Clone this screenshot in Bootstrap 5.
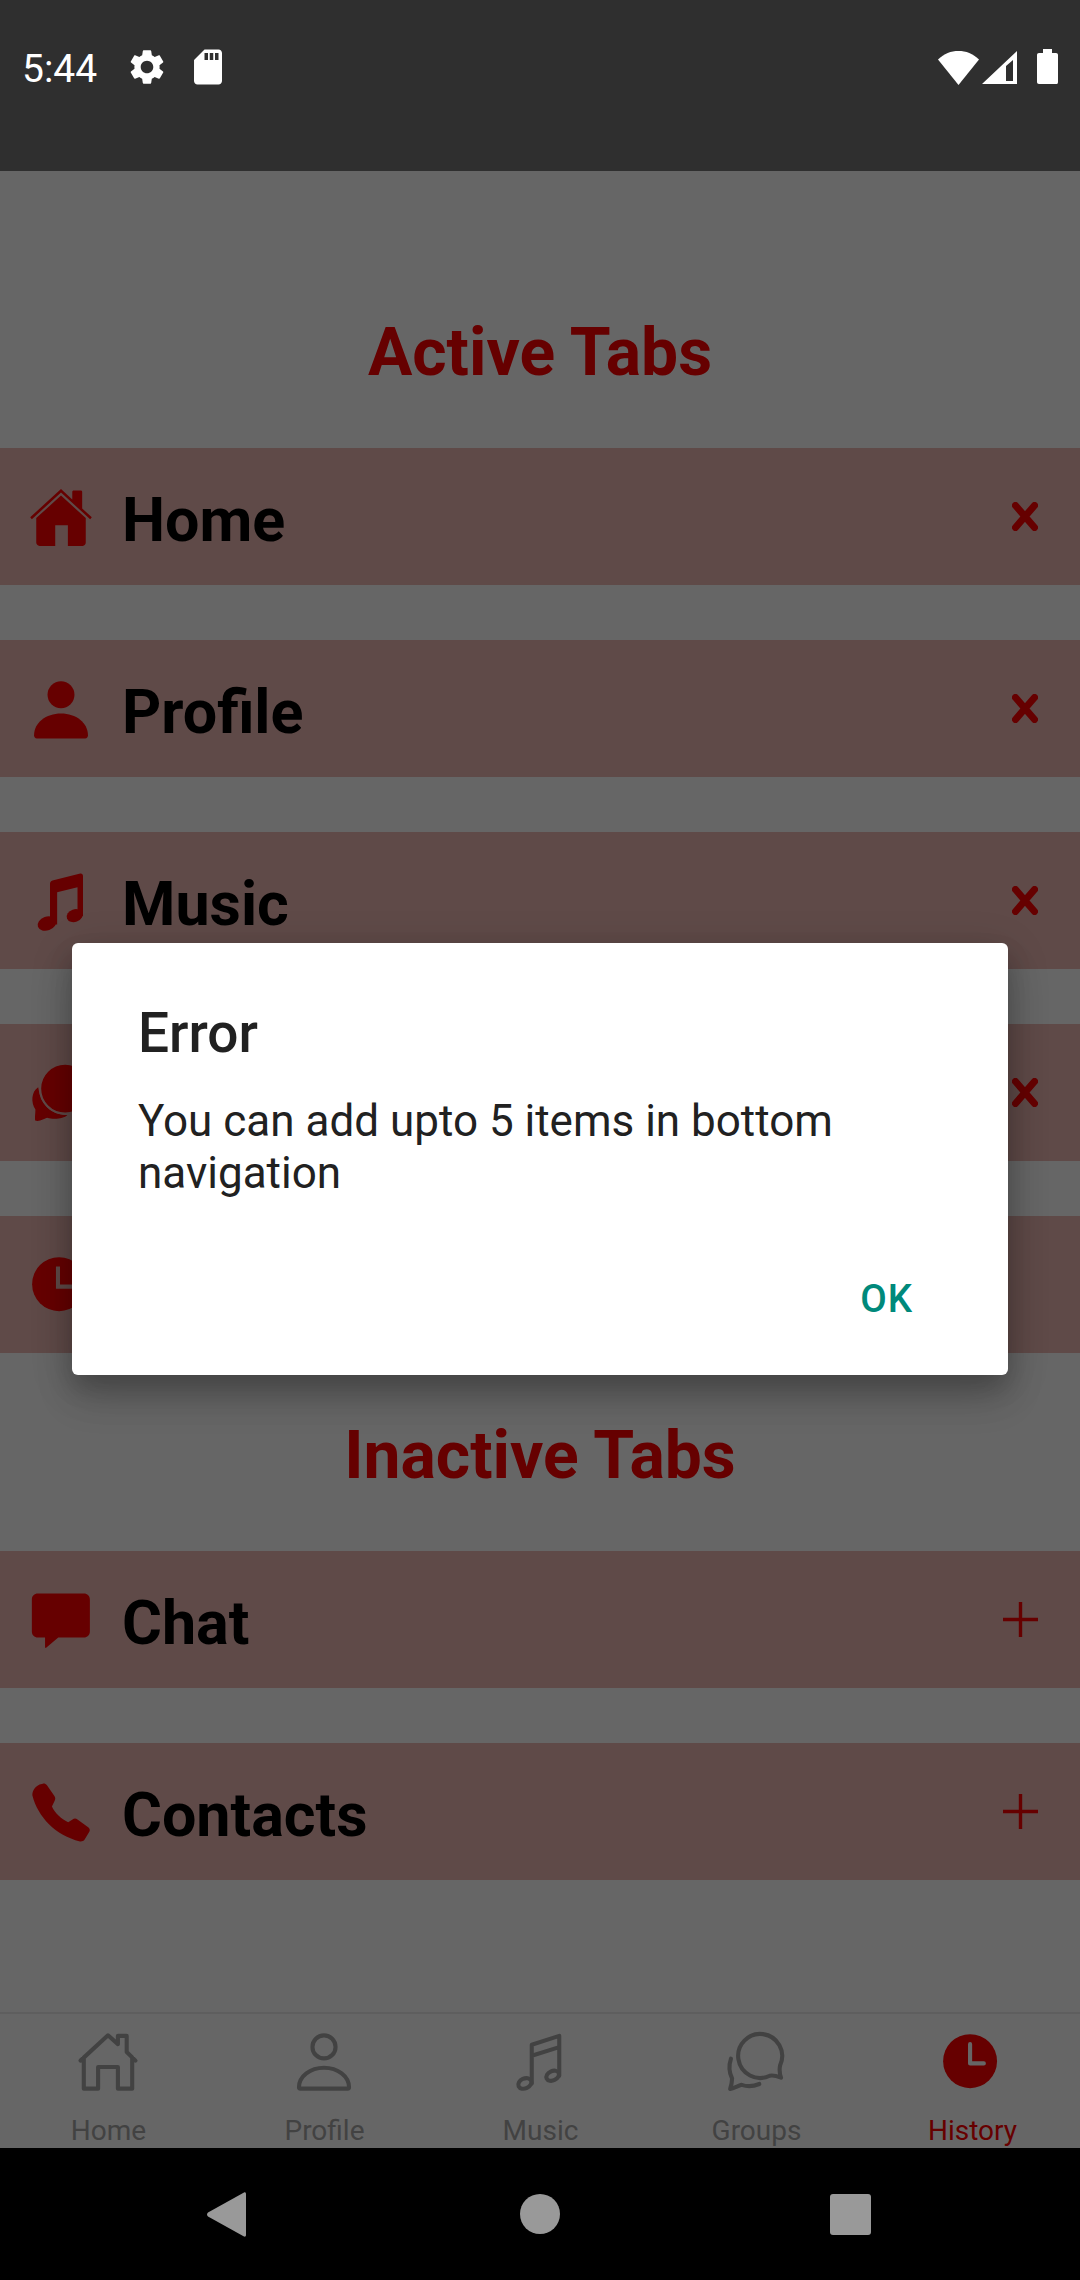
<!DOCTYPE html>
<html lang="en">
<head>
    <meta charset="UTF-8">
    <meta name="viewport" content="width=device-width, initial-scale=1.0">
    <title>Tabs</title>
    <link href="https://cdn.jsdelivr.net/npm/bootstrap@5.3.0/dist/css/bootstrap.min.css" rel="stylesheet">
    <style>
        body {
            font-family: Roboto, "Liberation Sans", sans-serif;
            width: 1080px;
            height: 2280px;
            overflow: hidden;
            background-color: #000;
        }

        .status-strip {
            height: 171px;
            background-color: #2f2f2f;
            color: #fff;
            padding: 46px 22px 0 22px;
        }

        .status-time {
            font-size: 39px;
            line-height: 45px;
            margin-right: 29px;
            margin-top: 1px;
        }

        .status-gear {
            margin-right: 19px;
        }

        .status-icons-right {
            gap: 3px;
            margin-top: 3px;
        }

        .status-signal {
            margin-right: 17px;
        }

        .app-area {
            height: 1977px;
            background-color: #fff;
        }

        .section-title {
            font-size: 66px;
            line-height: 77px;
            font-weight: 700;
            color: #f00;
            text-align: center;
            margin: 0 0 57px;
        }

        .section-title.first-title {
            padding-top: 143px;
        }

        .section-title.second-title {
            margin-top: 64px;
        }

        .tab-row {
            height: 137px;
            background-color: #eeb9b4;
            margin-bottom: 55px;
            padding: 0 42px 0 28px;
        }

        .tab-icon {
            width: 66px;
            height: 66px;
            flex-shrink: 0;
            fill: #f00;
        }

        .tab-name {
            font-size: 61px;
            line-height: 71px;
            font-weight: 700;
            color: #000;
            margin-left: 28px;
            padding-top: 8px;
        }

        .tab-close {
            stroke: #f00;
            stroke-width: 7;
            stroke-linecap: round;
        }

        .tab-add {
            stroke: #f00;
            stroke-width: 3.4;
        }

        .bottom-tabs {
            position: absolute;
            left: 0;
            bottom: 0;
            width: 100%;
            height: 136px;
            border-top: 2px solid #ebebeb;
            background-color: #fff;
            padding-top: 15px;
            overflow: hidden;
        }

        .bottom-tab {
            flex: 1 1 0;
            color: #a6a6a6;
        }

        .bottom-tab.selected {
            color: #f00;
        }

        .bottom-tab svg {
            width: 66px;
            height: 66px;
            fill: none;
            stroke: currentColor;
            stroke-width: 1.5;
            stroke-linejoin: round;
            stroke-linecap: round;
        }

        .bottom-tab span {
            font-size: 28px;
            line-height: 32px;
            margin-top: 20px;
            margin-left: 1px;
        }

        .dim-layer {
            background-color: rgba(0, 0, 0, .6);
        }

        .error-box {
            width: 936px;
            height: 432px;
            margin-bottom: 2px;
            background-color: #fff;
            border-radius: 6px;
            padding: 58px 95px 0 66px;
            color: #212121;
            box-shadow: 0 24px 38px rgba(0, 0, 0, .14), 0 9px 46px rgba(0, 0, 0, .14), 0 12px 24px rgba(0, 0, 0, .14);
        }

        .error-title {
            font-size: 55px;
            line-height: 64px;
            font-weight: 500;
            margin: 0 0 30px;
        }

        .error-text {
            font-size: 44px;
            line-height: 52px;
            margin: 0 0 77px;
        }

        .error-ok {
            font-family: inherit;
            font-size: 38.5px;
            line-height: 45px;
            font-weight: 500;
            letter-spacing: 1px;
            color: #00897b;
            padding: 0;
            border: 0;
            border-radius: 0;
        }

        .system-bar {
            height: 132px;
            background-color: #000;
            gap: 270px;
            padding-right: 3px;
            fill: #999;
        }

        .system-back {
            margin-right: 4px;
        }
    </style>
</head>
<body>
    <div class="status-strip d-flex align-items-start justify-content-between">
        <div class="d-flex align-items-start">
            <span class="status-time">5:44</span>
            <svg width="42" height="42" viewBox="0 0 24 24" fill="#fff" class="status-gear"><path d="M19.14 12.94c.04-.3.06-.61.06-.94 0-.32-.02-.64-.07-.94l2.03-1.58c.18-.14.23-.41.12-.61l-1.92-3.32c-.12-.22-.37-.29-.59-.22l-2.39.96c-.5-.38-1.03-.7-1.62-.94l-.36-2.54c-.04-.24-.24-.41-.48-.41h-3.84c-.24 0-.43.17-.47.41l-.36 2.54c-.59.24-1.13.57-1.62.94l-2.39-.96c-.22-.08-.47 0-.59.22L2.74 8.87c-.12.21-.08.47.12.61l2.03 1.58c-.05.3-.09.63-.09.94s.02.64.07.94l-2.03 1.58c-.18.14-.23.41-.12.61l1.92 3.32c.12.22.37.29.59.22l2.39-.96c.5.38 1.03.7 1.62.94l.36 2.54c.05.24.24.41.48.41h3.84c.24 0 .44-.17.47-.41l.36-2.54c.59-.24 1.13-.56 1.62-.94l2.39.96c.22.08.47 0 .59-.22l1.92-3.32c.12-.22.07-.47-.12-.61l-2.01-1.58zM12 15.6c-1.98 0-3.6-1.62-3.6-3.6s1.62-3.6 3.6-3.6 3.6 1.62 3.6 3.6-1.62 3.6-3.6 3.6z"/></svg>
            <svg width="42" height="42" viewBox="0 0 24 24" fill="#fff"><path d="M18 2h-8L4.02 8 4 20c0 1.1.9 2 2 2h12c1.1 0 2-.9 2-2V4c0-1.1-.9-2-2-2zm-6 6h-2V4h2v4zm3 0h-2V4h2v4zm3 0h-2V4h2v4z"/></svg>
        </div>
        <div class="status-icons-right d-flex align-items-end">
            <svg width="41" height="35" viewBox="0 0 41 35" fill="#fff"><path d="M0 9.5C6 3.5 13 1 20.5 1S35 3.5 41 9.5L20.5 35Z"/></svg>
            <svg width="35" height="35" viewBox="0 0 35 35" fill="#fff" class="status-signal"><path fill-rule="evenodd" d="M35 1V34H0ZM24 16V31H31V10Z"/></svg>
            <svg width="21" height="36" viewBox="0 0 21 36" fill="#fff"><path d="M6 0H15V4H19C20.2 4 21 4.8 21 6V33C21 34.700 20.200 35 19 35H2C.8 35 0 34.200 0 33V6C0 4.800 .8 4 2 4H6Z"/></svg>
        </div>
    </div>

    <div class="app-area position-relative">
        <h2 class="section-title first-title">Active Tabs</h2>

        <div class="tab-row d-flex align-items-center">
            <svg class="tab-icon" viewBox="0 0 24 24"><path d="M12 4.200 3 12.400V21.300C3 22 3.500 22.500 4.200 22.500H9.900V15H14.500V22.500H19.900C20.600 22.500 21 22 21 21.300V12.400Z"/><path d="M.8 12.100 12 1.800 16.100 5.600V2.900C16.100 2.600 16.300 2.400 16.600 2.400H19.200C19.500 2.400 19.700 2.600 19.700 2.900V8.900L23.200 12.100 22.600 12.800 12 3.100 1.400 12.800Z"/></svg>
            <span class="tab-name flex-grow-1">Home</span>
            <svg class="tab-close" width="26" height="29" viewBox="0 0 26 29"><path d="M3.500 3.500 22.500 25.500M22.500 3.500 3.500 25.500"/></svg>
        </div>

        <div class="tab-row d-flex align-items-center">
            <svg class="tab-icon" viewBox="0 0 24 24"><circle cx="12" cy="6.800" r="4.900"/><path d="M2.200 21.500C2.200 17 6.500 13.600 12 13.600S21.800 17 21.800 21.500C21.800 22.200 21.400 22.700 20.800 22.700H3.200C2.600 22.700 2.200 22.200 2.200 21.500Z"/></svg>
            <span class="tab-name flex-grow-1">Profile</span>
            <svg class="tab-close" width="26" height="29" viewBox="0 0 26 29"><path d="M3.500 3.500 22.500 25.500M22.500 3.500 3.500 25.500"/></svg>
        </div>

        <div class="tab-row d-flex align-items-center">
            <svg class="tab-icon" viewBox="0 0 24 24"><path d="M8 5.800C8 5.100 8.300 4.700 8.900 4.500L19 2C19.600 1.900 20 2.300 20 2.900V17.500H18V7L10.600 8.800V20.500H8Z"/><ellipse cx="6.900" cy="20.200" rx="3.500" ry="2.500" transform="rotate(-20 6.900 20.200)"/><ellipse cx="17" cy="17.300" rx="3" ry="2.300" transform="rotate(-20 17 17.300)"/></svg>
            <span class="tab-name flex-grow-1">Music</span>
            <svg class="tab-close" width="26" height="29" viewBox="0 0 26 29"><path d="M3.500 3.500 22.500 25.500M22.500 3.500 3.500 25.500"/></svg>
        </div>

        <div class="tab-row d-flex align-items-center">
            <svg class="tab-icon" viewBox="0 0 24 24"><path d="M3.700 9.900C1.200 11.500 1 15.500 2.700 18 2.700 19.500 2.400 21 2.600 22 4 22.600 6 21.300 7 21 9 21.600 13 21.500 14.300 20 10 20 5 18 3.700 9.900Z"/><circle cx="13.500" cy="10.400" r="9.100" stroke="#eeb9b4" stroke-width=".8"/></svg>
            <span class="tab-name flex-grow-1">Groups</span>
            <svg class="tab-close" width="26" height="29" viewBox="0 0 26 29"><path d="M3.500 3.500 22.500 25.500M22.500 3.500 3.500 25.500"/></svg>
        </div>

        <div class="tab-row d-flex align-items-center">
            <svg class="tab-icon" viewBox="0 0 24 24"><circle cx="11.300" cy="11.700" r="9.800"/><path d="M10.900 5.300V12.600H17" fill="none" stroke="#eeb9b4" stroke-width="1.500"/></svg>
            <span class="tab-name flex-grow-1">History</span>
        </div>

        <h2 class="section-title second-title">Inactive Tabs</h2>

        <div class="tab-row d-flex align-items-center">
            <svg class="tab-icon" viewBox="0 0 24 24"><path d="M3.600 2.400H20.300C21.600 2.400 22.500 3.300 22.500 4.600V16.200C22.500 17.500 21.600 18.400 20.300 18.400H11L6.600 22.100C6.400 22.200 6.200 22.100 6.200 21.900V18.400H3.600C2.300 18.400 1.400 17.500 1.400 16.200V4.600C1.400 3.300 2.300 2.400 3.600 2.400Z"/></svg>
            <span class="tab-name flex-grow-1">Chat</span>
            <svg class="tab-add" width="35" height="35" viewBox="0 0 35 35"><path d="M17.500 0V35M0 17.500H35"/></svg>
        </div>

        <div class="tab-row d-flex align-items-center">
            <svg class="tab-icon" viewBox="0 0 24 24"><path d="M4.200 2 5.400 1.700C6 1.600 6.500 1.800 6.900 2.300L9.600 6.200C10 6.800 10 7.300 9.700 7.900L8.700 10C9.800 12.400 12 14.500 14.600 15.700L16.200 14.700C16.800 14.300 17.400 14.300 18 14.700L22 17.600C22.500 18 22.600 18.600 22.300 19.200L20.600 22C20.200 22.600 19.500 22.800 18.900 22.700 10 20.500 3.600 13.800 1.600 6 1.500 4.900 2 3 4.200 2Z"/></svg>
            <span class="tab-name flex-grow-1">Contacts</span>
            <svg class="tab-add" width="35" height="35" viewBox="0 0 35 35"><path d="M17.500 0V35M0 17.500H35"/></svg>
        </div>

        <nav class="bottom-tabs d-flex">
            <div class="bottom-tab d-flex flex-column align-items-center">
                <svg viewBox="0 0 24 24"><path d="M2 11.500 12 2.300 15.600 5.500V2.500H18.800V8.400L22 11.500M3.200 10.400V21.700H8.400V13.800H15.600V21.700H20.800V10.400"/></svg>
                <span>Home</span>
            </div>
            <div class="bottom-tab d-flex flex-column align-items-center">
                <svg viewBox="0 0 24 24"><circle cx="12" cy="6.500" r="4.200"/><path d="M2.900 21.200C2.900 17.200 7 14.100 12 14.100S21.100 17.200 21.100 21.200C21.100 21.500 20.900 21.700 20.600 21.700H3.400C3.100 21.700 2.900 21.500 2.900 21.200Z"/></svg>
                <span>Profile</span>
            </div>
            <div class="bottom-tab d-flex flex-column align-items-center">
                <svg viewBox="0 0 24 24"><path d="M9 19.800V5.700L19 2.500V17M9 9.700 19 6.600"/><ellipse cx="6.500" cy="19.800" rx="2.500" ry="1.800" transform="rotate(-25 6.500 19.800)"/><ellipse cx="16.600" cy="17" rx="2.400" ry="1.700" transform="rotate(-25 16.600 17)"/></svg>
                <span>Music</span>
            </div>
            <div class="bottom-tab d-flex flex-column align-items-center">
                <svg viewBox="0 0 24 24"><path d="M21.100 17.700C20.600 16.300 20.400 14.800 20.800 13.100A8 8 0 1 0 17 17C18.400 16.700 19.800 17.200 21.100 17.700Z"/><path d="M2.900 10.800C2 13.500 2.300 16 3.300 18 3.300 19.300 3 20.500 2.600 21.800 4 21.500 5.500 20.600 6.800 20.300 8.800 21 11 20.900 13.200 20"/></svg>
                <span>Groups</span>
            </div>
            <div class="bottom-tab selected d-flex flex-column align-items-center">
                <svg viewBox="0 0 24 24"><circle cx="11.300" cy="11.700" r="9.800" fill="#f00" stroke="none"/><path d="M11.300 5.500V12.500H16.300" stroke="#fff" stroke-width="1.500"/></svg>
                <span>History</span>
            </div>
        </nav>

        <div class="dim-layer position-absolute top-0 start-0 w-100 h-100 d-flex align-items-center justify-content-center">
            <div class="error-box">
                <h5 class="error-title">Error</h5>
                <p class="error-text">You can add upto 5 items in bottom navigation</p>
                <div class="d-flex justify-content-end">
                    <button type="button" class="btn error-ok">OK</button>
                </div>
            </div>
        </div>
    </div>

    <div class="system-bar d-flex align-items-center justify-content-center">
        <svg class="system-back" width="39" height="45" viewBox="0 0 39 45"><path d="M37 .5C38 0 39 .7 39 2V43C39 44.300 38 45 37 44.500L1 24.500C-.3 23.500-.3 21.500 1 20.500Z"/></svg>
        <svg width="40" height="40" viewBox="0 0 40 40"><circle cx="20" cy="20" r="20"/></svg>
        <svg width="41" height="41" viewBox="0 0 41 41"><rect width="41" height="41" rx="3"/></svg>
    </div>

    <script src="https://cdn.jsdelivr.net/npm/bootstrap@5.3.0/dist/js/bootstrap.bundle.min.js"></script>
</body>
</html>
